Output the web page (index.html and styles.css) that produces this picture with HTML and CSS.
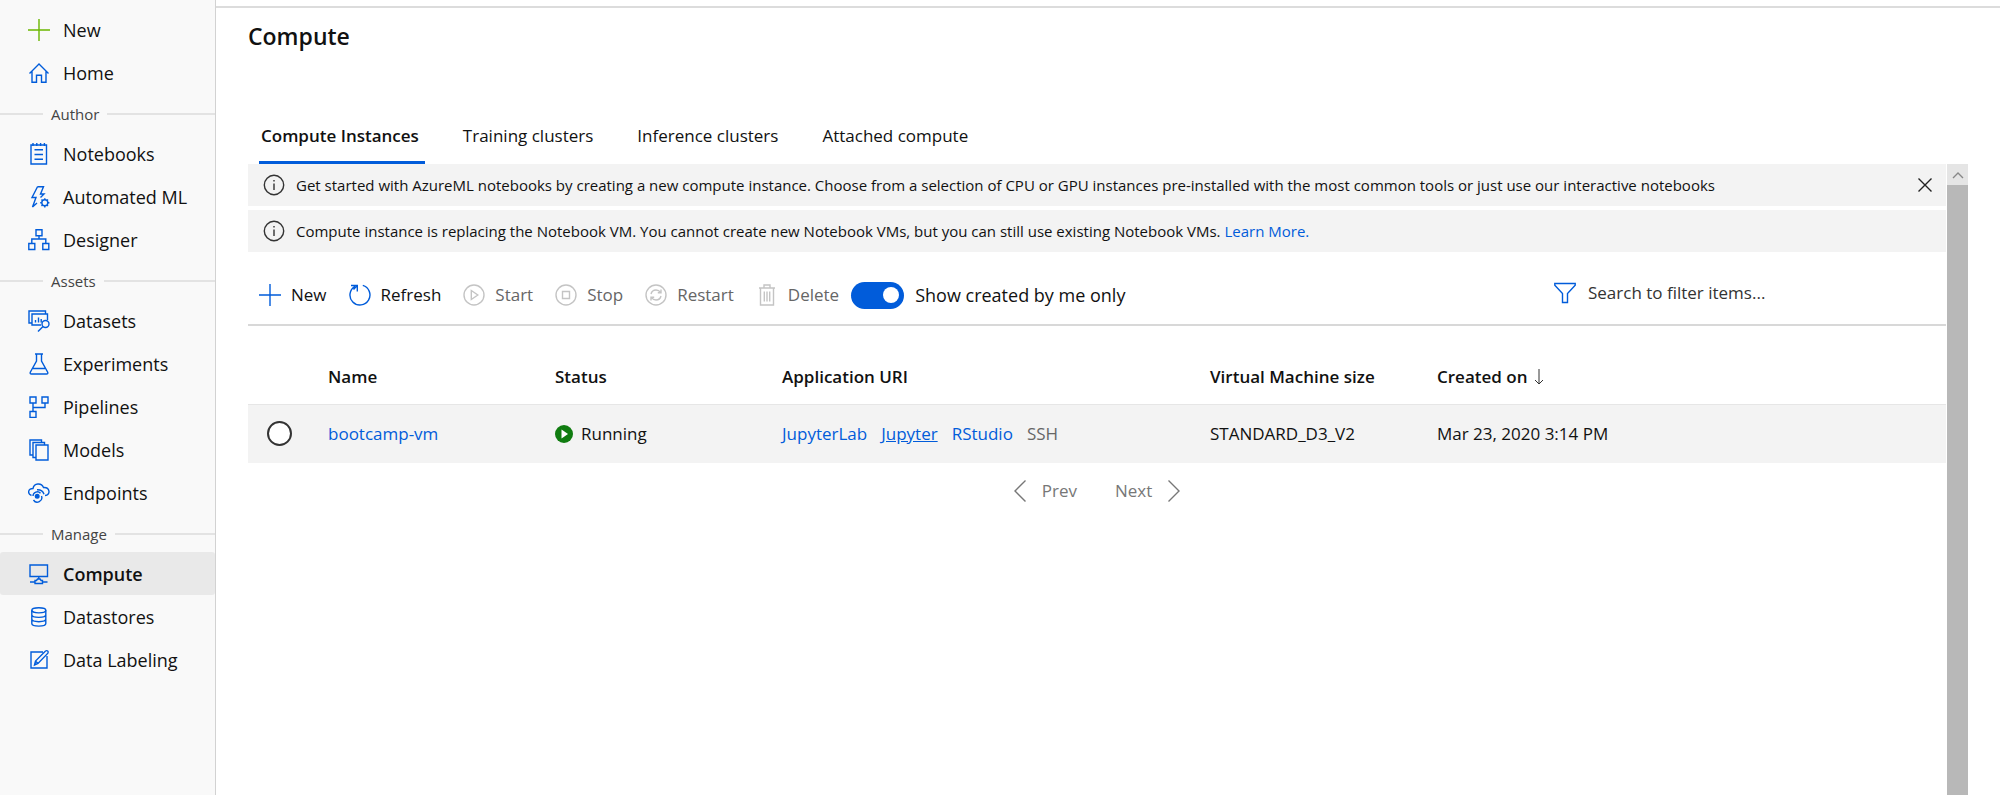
FILE: index.html
```html
<!DOCTYPE html>
<html lang="en">
<head>
<meta charset="utf-8">
<title>Compute</title>
<link rel="stylesheet" href="styles.css">
</head>
<body>
<div class="shell">
  <nav class="sidebar" aria-label="Workspace">
    <a class="nav-item" href="#new"><svg class="icon icon-green" viewBox="0 0 22 22"><path d="M11 0v22M0 11h22"/></svg>New</a>
    <a class="nav-item" href="#home"><svg class="icon" viewBox="0 0 22 22"><path d="M1.500 11.500 11 2l9.500 9.500M4 9.500v10.700h4.500v-7h5v7H18V9.500"/></svg>Home</a>
    <div class="nav-group">Author</div>
    <a class="nav-item" href="#notebooks"><svg class="icon" viewBox="0 0 22 22"><path d="M3 2h15.500v19H3zM6.500 6.800h8.500M6.500 11.500h8.500M6.500 16.300h8.500M5 0v3M8.800 0v3M12.600 0v3M16.400 0v3"/></svg>Notebooks</a>
    <a class="nav-item" href="#automl"><svg class="icon" viewBox="0 0 22 22"><path d="M9.500.8h6L12.500 8H16l-3.500 3.500M9.500.8 4 11.500h4L4.500 21l4.500-4"/><circle cx="16.800" cy="16.800" r="3"/><path d="M16.800 12.200v1.500M16.800 19.900v1.500M12.200 16.800h1.500M19.900 16.800h1.500M13.500 13.500l1 1M19 19l1 1M13.500 20l1-1M19 14.500l1-1"/></svg>Automated ML</a>
    <a class="nav-item" href="#designer"><svg class="icon" viewBox="0 0 22 22"><path d="M8 .8h6v6H8zM.8 14.500h6v6h-6zM14.800 14.500h6v6h-6zM11 6.800V10M3.800 14.500V10h14v4.500"/></svg>Designer</a>
    <div class="nav-group">Assets</div>
    <a class="nav-item" href="#datasets"><svg class="icon" viewBox="0 0 22 22"><path d="M3.500 13H1V1h16.500v2.500M13 15H4V4h15.500v6M7.500 12.500V10M10.500 12.500V7.500M13.200 12.500V9"/><circle cx="17.500" cy="14" r="3.500"/><path d="m15 16.500-5 5"/></svg>Datasets</a>
    <a class="nav-item" href="#experiments"><svg class="icon" viewBox="0 0 22 22"><path d="M7 1h8M8.500 1v7L2.300 19.200q-.6 1.800 1.200 1.800h15q1.800 0 1.200-1.800L13.500 8V1M5 15.500h12"/></svg>Experiments</a>
    <a class="nav-item" href="#pipelines"><svg class="icon" viewBox="0 0 22 22"><path d="M2 1h6v6H2zM14 1h6v6h-6zM2 15.500h6v6H2zM5 7v8.500M17 7v4.500H5"/></svg>Pipelines</a>
    <a class="nav-item" href="#models"><svg class="icon" viewBox="0 0 22 22"><path d="M8 6h12v15H8zM8 18.500H5v-15h11.500V6M5 16H2V1h11.500v2.500"/></svg>Models</a>
    <a class="nav-item" href="#endpoints"><svg class="icon" viewBox="0 0 22 22"><path d="M3.500 13.500C-.8 12-.2 6.500 5 6.500 6 1 13.500.5 15.500 5.500 22 5 23 13 17 13.500M5 14a4.300 4.300 0 0 1 7.500-2.800M13.500 14a4.500 4.500 0 0 1-8 4M9 7.800q5.500-.3 7 4.500"/><circle cx="9.200" cy="14.200" r="1.800" class="solid"/></svg>Endpoints</a>
    <div class="nav-group">Manage</div>
    <a class="nav-item nav-current" href="#compute" aria-current="page"><svg class="icon" viewBox="0 0 22 22"><path d="M2 2h17.500v11.500H2zM10.800 13.500V16M2 19h5M14.500 19h5M7 17.500h1.500l1-1.500h2.600l1 1.500h1.400v3H7z"/></svg>Compute</a>
    <a class="nav-item" href="#datastores"><svg class="icon" viewBox="0 0 22 22"><ellipse cx="10.800" cy="4.300" rx="7" ry="2.600"/><path d="M3.800 4.300v13.200c0 3.500 14 3.500 14 0V4.300M3.800 8.700c0 3.500 14 3.500 14 0M3.800 13.100c0 3.500 14 3.500 14 0"/></svg>Datastores</a>
    <a class="nav-item" href="#labeling"><svg class="icon" viewBox="0 0 22 22"><path d="M15 3H3v16h16V7M6.500 16l1-4L17.500 2q1.300-.8 2.200 0t.2 2.200L10 14.500zM7.500 12l2.500 2.500"/></svg>Data Labeling</a>
  </nav>

  <main class="main">
    <h1 class="title">Compute</h1>
    <div class="tabs" role="tablist">
      <button class="tab tab-current" role="tab" aria-selected="true">Compute Instances</button>
      <button class="tab" role="tab">Training clusters</button>
      <button class="tab" role="tab">Inference clusters</button>
      <button class="tab" role="tab">Attached compute</button>
    </div>

    <div class="scroller">
      <div class="content">
        <div class="banner">
          <svg class="icon icon-dark" viewBox="0 0 22 22"><circle cx="11" cy="11" r="9.700"/><path d="M11 9.500V16M11 6v1.600"/></svg>
          <span class="banner-text">Get started with AzureML notebooks by creating a new compute instance. Choose from a selection of CPU or GPU instances pre-installed with the most common tools or just use our interactive notebooks</span>
          <button class="close" aria-label="Dismiss"><svg class="close-icon" viewBox="0 0 14 14"><path d="m.5.5 13 13M13.500.5l-13 13"/></svg></button>
        </div>
        <div class="banner">
          <svg class="icon icon-dark" viewBox="0 0 22 22"><circle cx="11" cy="11" r="9.700"/><path d="M11 9.500V16M11 6v1.600"/></svg>
          <span class="banner-text">Compute instance is replacing the Notebook VM. You cannot create new Notebook VMs, but you can still use existing Notebook VMs. <a class="link" href="#learn">Learn More.</a></span>
        </div>

        <div class="toolbar">
          <div class="commands">
            <button class="command"><svg class="icon" viewBox="0 0 22 22"><path d="M11 0v22M0 11h22"/></svg>New</button>
            <button class="command"><svg class="icon" viewBox="0 0 22 22"><path d="M13.800 1.400A10 10 0 1 1 6 2.300M2 1.500h6.300v6M8 1.800 4.500 5.500"/></svg>Refresh</button>
            <button class="command" disabled><svg class="icon" viewBox="0 0 22 22"><circle cx="11" cy="11" r="10"/><path d="M8.300 6.500v9l6.500-4.500z"/></svg>Start</button>
            <button class="command" disabled><svg class="icon" viewBox="0 0 22 22"><circle cx="11" cy="11" r="10"/><path d="M7.500 7.500h7v7h-7z"/></svg>Stop</button>
            <button class="command" disabled><svg class="icon" viewBox="0 0 22 22"><circle cx="11" cy="11" r="10"/><path d="M6 10q1-4 5-4 3 0 4.500 2.500M16 5.500v3.200h-3.200M16 12q-1 4-5 4-3 0-4.500-2.500M6 16.500v-3.200h3.200"/></svg>Restart</button>
            <button class="command" disabled><svg class="icon" viewBox="0 0 22 22"><path d="M3 4h16M8 4V1h6v3M4.500 4v17h13V4M8.300 7.500v10M11 7.500v10M13.700 7.500v10"/></svg>Delete</button>
          </div>
          <label class="toggle"><input class="switch" type="checkbox" role="switch" checked>Show created by me only</label>
          <label class="search"><svg class="icon" viewBox="0 0 22 22"><path d="M.8 1.500h20.400v1.800L13.500 11.500v9h-5v-9L.8 3.300z"/></svg><input class="search-input" type="text" aria-label="Filter" placeholder="Search to filter items..."></label>
        </div>

        <table class="grid">
          <colgroup><col class="col-pick"><col class="col-std"><col class="col-std"><col class="col-wide"><col class="col-std"><col></colgroup>
          <thead>
            <tr><th></th><th>Name</th><th>Status</th><th>Application URI</th><th>Virtual Machine size</th><th>Created on <svg class="sort" viewBox="0 0 10 16"><path d="M5 0v15M1 11l4 4 4-4"/></svg></th></tr>
          </thead>
          <tbody>
            <tr>
              <td><input class="pick" type="radio" name="instance" aria-label="Select bootcamp-vm"></td>
              <td><a class="link" href="#vm">bootcamp-vm</a></td>
              <td><span class="status"><svg class="running" viewBox="0 0 18 18"><circle cx="9" cy="9" r="9"/><path d="M6.500 4.500v9L13 9z"/></svg>Running</span></td>
              <td><span class="uris"><a class="link" href="#lab">JupyterLab</a><a class="link link-hover" href="#jupyter">Jupyter</a><a class="link" href="#rstudio">RStudio</a><span class="muted">SSH</span></span></td>
              <td>STANDARD_D3_V2</td>
              <td>Mar 23, 2020 3:14 PM</td>
            </tr>
          </tbody>
        </table>

        <div class="pager">
          <button class="page-button" disabled><svg class="chevron" viewBox="0 0 12 22"><path d="M11.500.5 1 11l10.500 10.500"/></svg>Prev</button>
          <button class="page-button" disabled>Next<svg class="chevron" viewBox="0 0 12 22"><path d="M.5.5 11 11 .5 21.500"/></svg></button>
        </div>
      </div>
      <div class="scrollbar" aria-hidden="true">
        <div class="scroll-up"><svg class="scroll-arrow" viewBox="0 0 12 8"><path d="m1 7 5-5 5 5"/></svg></div>
        <div class="scroll-thumb"></div>
      </div>
    </div>
  </main>
</div>
</body>
</html>
```
FILE: styles.css
```css
* { box-sizing: border-box; }

body {
  margin: 0;
  background: #fff;
  color: #111;
  font-family: "Open Sans", "Noto Sans", sans-serif;
  font-size: 17px;
  line-height: 24px;
}

button, input {
  margin: 0;
  padding: 0;
  border: 0;
  background: none;
  color: inherit;
  font: inherit;
}

svg {
  flex: none;
  fill: none;
  stroke: #015cda;
  stroke-width: 1.4;
}

.shell {
  display: grid;
  grid-template-columns: 216px minmax(0, 1fr);
  min-height: 100vh;
}

/* Sidebar */
.sidebar {
  padding-top: 8px;
  border-right: 1px solid #d2d2d2;
  background: #f9f9f9;
}

.nav-item {
  display: flex;
  align-items: center;
  gap: 13px;
  height: 43px;
  padding-left: 28px;
  color: #111;
  font-size: 18px;
  text-decoration: none;
}

.nav-current {
  border-radius: 3px;
  background: #e9e9e9;
  font-weight: 600;
}

.nav-group {
  display: flex;
  align-items: center;
  gap: 8px;
  height: 38px;
  padding-top: 2px;
  color: #444;
  font-size: 15px;
}

.nav-group::before,
.nav-group::after {
  content: "";
  width: 43px;
  height: 2px;
  background: #e3e3e3;
}

.nav-group::after { flex: 1; }

.icon {
  width: 22px;
  height: 22px;
}

.icon-green { stroke: #6bb700; }
.icon-dark { stroke: #333; }
.solid { fill: #015cda; }

/* Page */
.main {
  display: flex;
  flex-direction: column;
  margin-top: 6px;
  padding: 0 32px;
  border-top: 2px solid #dcdcdc;
}

.title {
  margin: 12px 0 0;
  font-size: 23px;
  font-weight: 600;
  line-height: 32px;
}

.tabs {
  display: flex;
  gap: 36px;
  margin-top: 56px;
  padding-left: 11px;
}

.tab {
  height: 56px;
  padding: 2px 6px 0 2px;
  border-bottom: 3px solid transparent;
}

.tab-current {
  border-color: #015cda;
  font-weight: 600;
}

.scroller {
  display: flex;
  flex: 1;
}

.content {
  flex: 1;
  min-width: 0;
}

.banner {
  display: flex;
  align-items: center;
  gap: 11px;
  height: 42px;
  margin-bottom: 4px;
  padding: 0 14px 0 15px;
  background: #f3f3f3;
  font-size: 15px;
}

.banner-text { flex: 1; }
.close { display: flex; }

.close-icon {
  width: 14px;
  height: 14px;
  stroke: #222;
}

.link {
  color: #015cda;
  text-decoration: none;
}

.link-hover { text-decoration: underline; }

/* Toolbar */
.toolbar {
  display: flex;
  align-items: center;
  height: 70px;
  padding: 10px 174px 0 11px;
  border-bottom: 2px solid #d8d8d8;
}

.commands {
  display: flex;
  gap: 22px;
}

.command {
  display: flex;
  align-items: center;
  gap: 10px;
}

.command:disabled { color: #666; }
.command:disabled .icon { stroke: #c4c4c4; }

.toggle {
  display: flex;
  align-items: center;
  gap: 11px;
  margin-left: 12px;
  font-size: 18px;
}

.switch {
  display: flex;
  align-items: center;
  justify-content: flex-end;
  width: 53px;
  height: 27px;
  padding: 5px;
  border-radius: 14px;
  background: #015cda;
  appearance: none;
}

.switch::before {
  content: "";
  width: 16px;
  height: 16px;
  border-radius: 50%;
  background: #fff;
}

.search {
  display: flex;
  align-items: center;
  gap: 12px;
  margin-bottom: 4px;
  margin-left: auto;
}

.search-input { width: 184px; }

.search-input::placeholder {
  color: #333;
  opacity: 1;
}

/* Instances */
.grid {
  width: 100%;
  margin-top: 24px;
  border-collapse: collapse;
  table-layout: fixed;
}

.col-pick { width: 80px; }
.col-std { width: 227px; }
.col-wide { width: 428px; }

.grid th,
.grid td {
  padding: 0;
  text-align: left;
  white-space: nowrap;
}

.grid th {
  height: 54px;
  font-weight: 600;
}

.grid td {
  height: 59px;
  border-top: 1px solid #e6e6e6;
  background: #f3f3f3;
}

.sort {
  width: 10px;
  height: 16px;
  margin-left: 2px;
  stroke: #333;
  stroke-width: 1;
  vertical-align: -2px;
}

.pick {
  display: block;
  width: 25px;
  height: 25px;
  margin-left: 19px;
  border: 2px solid #333;
  border-radius: 50%;
  background: #fff;
  appearance: none;
}

.status {
  display: flex;
  align-items: center;
  gap: 8px;
}

.running {
  width: 18px;
  height: 18px;
  fill: #107c10;
  stroke: none;
}

.running path { fill: #fff; }

.uris {
  display: flex;
  gap: 14px;
}

.muted { color: #666; }

.pager {
  display: flex;
  justify-content: center;
  gap: 38px;
  padding-top: 16px;
  color: #777;
}

.page-button {
  display: flex;
  align-items: center;
  gap: 16px;
}

.chevron {
  width: 12px;
  height: 22px;
  stroke: #777;
}

/* Scrollbar */
.scrollbar {
  display: flex;
  flex-direction: column;
  width: 22px;
  padding-left: 1px;
}

.scroll-up {
  display: flex;
  align-items: center;
  justify-content: center;
  height: 21px;
  background: #e5e5e5;
}

.scroll-arrow {
  width: 12px;
  height: 8px;
  stroke: #888;
}

.scroll-thumb {
  flex: 1;
  background: #b8b8b8;
}
```
